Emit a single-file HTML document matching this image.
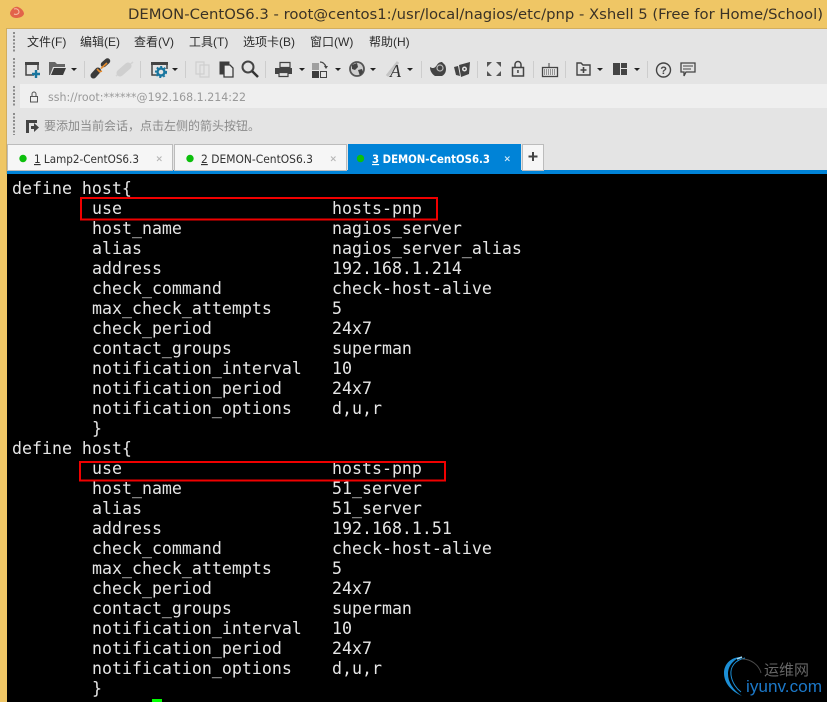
<!DOCTYPE html>
<html><head><meta charset="utf-8"><style>
html,body{margin:0;padding:0;background:#000}
body{width:827px;height:702px;overflow:hidden;position:relative}
svg{position:absolute;left:0;top:0;display:block}
.t{font-family:"DejaVu Sans Mono",monospace;font-size:16.6px;fill:#e6e6e6;white-space:pre}
.m{font-family:"Liberation Sans","Noto Sans CJK SC",sans-serif;font-size:12px;fill:#2b2b2b}
.tb{font-family:"DejaVu Sans","Noto Sans CJK SC",sans-serif;font-size:11.5px;fill:#333}
</style></head><body>
<svg width="827" height="702" viewBox="0 0 827 702" xmlns="http://www.w3.org/2000/svg">
<rect width="827" height="702" fill="#000"/>
<!-- frame -->
<rect width="827" height="28" fill="#efc665"/>
<rect width="7" height="702" fill="#efc665"/>
<rect x="6" y="28" width="821" height="142" fill="#e4e4e4"/>
<rect x="6" y="28" width="821" height="1" fill="#d2ae5e"/>
<rect x="6" y="28" width="1" height="146" fill="#d2ae5e"/>
<!-- app icon -->
<path d="M10 13c1-4 5-7 8-6 3 1 6 4 6 7-1 3-5 4-8 4-3 0-6-2-6-5z" fill="#e2634a"/>
<path d="M14 9c3-1 5 1 5 3s-3 3-5 2" fill="none" stroke="#f6c0a8" stroke-width="1"/>
<text x="128" y="19" font-family="'DejaVu Sans',sans-serif" font-size="14.6" fill="#3a3226" textLength="695" lengthAdjust="spacingAndGlyphs">DEMON-CentOS6.3 - root@centos1:/usr/local/nagios/etc/pnp - Xshell 5 (Free for Home/School)</text>
<!-- grips -->
<path d="M14 32v20M14 58v20M14 86v20M14 113v22" stroke="#8c8c8c" stroke-width="2" stroke-dasharray="2 1.500"/>
<!-- menu -->
<text class="m" x="27" y="46">文件(F)</text>
<text class="m" x="80" y="46">编辑(E)</text>
<text class="m" x="134" y="46">查看(V)</text>
<text class="m" x="189" y="46">工具(T)</text>
<text class="m" x="243" y="46">选项卡(B)</text>
<text class="m" x="310" y="46">窗口(W)</text>
<text class="m" x="369" y="46">帮助(H)</text>
<!-- toolbar separators -->
<g fill="#cdcdcd"><rect x="84" y="61" width="1" height="17"/><rect x="140" y="61" width="1" height="17"/><rect x="185" y="61" width="1" height="17"/><rect x="265" y="61" width="1" height="17"/><rect x="421" y="61" width="1" height="17"/><rect x="477" y="61" width="1" height="17"/><rect x="533" y="61" width="1" height="17"/><rect x="565" y="61" width="1" height="17"/><rect x="647" y="61" width="1" height="17"/></g>
<!-- new session -->
<path d="M26 63v12h8M38 65v5" fill="none" stroke="#444" stroke-width="1.500"/><path d="M25 62h14v3H25z" fill="#444"/>
<path d="M36 70v8M32 74h8" stroke="#19769f" stroke-width="2.400"/>
<!-- open -->
<path d="M49 75V62h6l2 2h8v3h-12l-3 8z" fill="#666"/><path d="M51 75l3-7h12l-3 7z" fill="#3c3c3c"/>
<path d="M71 68h6l-3 3z" fill="#222"/>
<!-- connect -->
<path d="M93.500 75.500l4.500-5" stroke="#3b3b3b" stroke-width="6" stroke-linecap="round"/>
<path d="M103.500 64.500l4-3.500" stroke="#3b3b3b" stroke-width="5.500" stroke-linecap="round"/>
<path d="M99 72l3-1M97 69l3 3" stroke="#e58c2e" stroke-width="1.600"/>
<path d="M101 68.500l6-5.500" stroke="#e58c2e" stroke-width="1.700"/>
<!-- disconnect -->
<path d="M116 76l17-14" stroke="#d4d4d4" stroke-width="1.500"/>
<path d="M120 73l8-7" stroke="#cfcfcf" stroke-width="7" stroke-linecap="round"/>
<!-- props -->
<path d="M152 63v12h6M167 65v4" fill="none" stroke="#444" stroke-width="1.500"/><path d="M151 62h17v3h-17z" fill="#444"/>
<circle cx="161" cy="72" r="3.500" fill="none" stroke="#19769f" stroke-width="2.400"/><circle cx="161" cy="72" r="5.300" fill="none" stroke="#19769f" stroke-width="1.500" stroke-dasharray="2 2"/>
<path d="M172 68h6l-3 3z" fill="#222"/>
<!-- copy -->
<path d="M196 62h8v12h-8zM200 65h9v12h-9z" fill="#e4e4e4" stroke="#cfcfcf" stroke-width="1.200"/>
<!-- paste -->
<path d="M226 74h-6V62h9v3" fill="#3c3c3c" stroke="#3c3c3c"/><path d="M224 65h6l3 3v9h-9z" fill="#e9e9e9" stroke="#3c3c3c" stroke-width="1.300"/>
<!-- find -->
<circle cx="248" cy="67" r="5.500" fill="none" stroke="#444" stroke-width="2"/><path d="M252 71l6 6" stroke="#333" stroke-width="2.500"/>
<!-- print -->
<path d="M280 62.500h10v5h-10z" fill="#e4e4e4" stroke="#444" stroke-width="1.200"/><path d="M275 68h17v6h-17z" fill="#444"/><path d="M279 72.500h9v4h-9z" fill="#e4e4e4" stroke="#444" stroke-width="1.200"/>
<path d="M299 68h6l-3 3z" fill="#222"/>
<!-- transfer -->
<rect x="312" y="63" width="7" height="7" fill="#a0a0a0"/><rect x="312" y="71" width="7" height="7" fill="#3c3c3c"/><rect x="320.500" y="71.500" width="6" height="6" fill="none" stroke="#444"/>
<path d="M320 62c3 0 5 2 6 5" fill="none" stroke="#444" stroke-width="1.300"/><path d="M324 66h4l-2 3z" fill="#444"/>
<path d="M335 68h6l-3 3z" fill="#222"/>
<!-- globe -->
<circle cx="357" cy="69" r="7" fill="#cfcfcf" stroke="#555" stroke-width="1.800"/><path d="M352 65l5-2 1 4-3 3-3-1zM358 70l4-1 1 3-3 4z" fill="#444"/>
<path d="M370 68h6l-3 3z" fill="#222"/>
<!-- font -->
<path d="M387 76l11-14" stroke="#c4c4c4" stroke-width="3"/>
<text x="390" y="77" font-family="'Liberation Serif',serif" font-style="italic" font-size="18" fill="#333">A</text>
<path d="M407 68h6l-3 3z" fill="#222"/>
<!-- swirl -->
<path d="M430 67c3 2 5 1 7-2 1-2 3-3 5-3l3 3c2 4 1 9-3 11h-7c-3-2-5-5-5-9z" fill="#444"/><circle cx="440" cy="68" r="3" fill="none" stroke="#bbb" stroke-width="1.200"/>
<!-- xftp -->
<path d="M454 67l4-1 2 10-4-1zM459 65l11-3-1 12-8 3z" fill="#444"/><circle cx="464.500" cy="69" r="2.500" fill="#e4e4e4"/><circle cx="464.500" cy="69" r="1" fill="#444"/>
<!-- fullscreen -->
<path d="M487 62h5l-5 5zM501 62h-5l5 5zM487 76h5l-5-5zM501 76h-5l5-5z" fill="#555"/>
<!-- lock -->
<rect x="512.500" y="67.500" width="11" height="8.500" fill="none" stroke="#444" stroke-width="1.500"/><path d="M515 67v-2.500a3 3 0 0 1 6 0V67" fill="none" stroke="#444" stroke-width="1.500"/><rect x="517.200" y="70" width="1.500" height="3" fill="#444"/>
<!-- keyboard -->
<rect x="542.500" y="67.500" width="15" height="9" fill="none" stroke="#444" stroke-width="1.300"/><path d="M544 70h12M544 72h12M544 74h12" stroke="#444" stroke-width="1" stroke-dasharray="1 1"/><path d="M549 67v-4" stroke="#444"/>
<!-- add folder -->
<path d="M577 63h4l2 2h7v10h-13z" fill="none" stroke="#444" stroke-width="1.400"/><path d="M583.500 67v6M580.500 70h6" stroke="#444" stroke-width="1.600"/>
<path d="M597 68h6l-3 3z" fill="#222"/>
<!-- layout -->
<rect x="613" y="63" width="7" height="12" fill="#444"/><rect x="621" y="63" width="6" height="5" fill="#444"/><rect x="621" y="69" width="6" height="6" fill="#444"/>
<path d="M634 68h6l-3 3z" fill="#222"/>
<!-- help -->
<circle cx="663.500" cy="70" r="7" fill="none" stroke="#444" stroke-width="1.400"/>
<text x="660.300" y="74" font-family="'Liberation Sans',sans-serif" font-size="11" font-weight="bold" fill="#444">?</text>
<!-- chat -->
<path d="M681 63h14v9h-9l-2 4v-4h-3z" fill="none" stroke="#444" stroke-width="1.300"/><path d="M683 66h10M683 69h8" stroke="#444"/>
<!-- address bar -->
<rect x="20" y="84" width="807" height="24" fill="#efefef"/>
<rect x="30.500" y="96.500" width="7" height="5.500" fill="none" stroke="#555"/><path d="M32 96v-2a2 2 0 0 1 4 0v2" fill="none" stroke="#555"/>
<text x="48" y="101" font-family="'DejaVu Sans',sans-serif" font-size="11.500" fill="#999" textLength="198" lengthAdjust="spacingAndGlyphs">ssh://root:******@192.168.1.214:22</text>
<!-- hint -->
<path d="M26 120h11v3h-8v10h-3z" fill="#444"/><path d="M31 126h3v-3l5 4.500-5 4.500v-3h-3z" fill="#444"/>
<text x="44" y="130" font-family="'Noto Sans CJK SC',sans-serif" font-size="12" fill="#8a8a8a">要添加当前会话，点击左侧的箭头按钮。</text>
<!-- tabs -->
<rect x="7" y="170" width="820" height="4" fill="#0083d7"/>
<rect x="7.500" y="144.500" width="165" height="26" fill="#f6f6f6" stroke="#bcbcbc"/>
<rect x="174.500" y="144.500" width="172" height="26" fill="#f6f6f6" stroke="#bcbcbc"/>
<rect x="348" y="144" width="173" height="27" fill="#0083d7"/>
<rect x="522.500" y="144.500" width="21" height="26" fill="#f6f6f6" stroke="#bcbcbc"/>
<path d="M533 152v9M528.500 156.500h9" stroke="#444" stroke-width="2"/>
<circle cx="23" cy="158.500" r="3.700" fill="#0cbf0c"/>
<circle cx="190" cy="158.500" r="3.700" fill="#0cbf0c"/>
<circle cx="360.500" cy="158.500" r="3.700" fill="#0cbf0c"/>
<text class="tb" x="34" y="163" textLength="105" lengthAdjust="spacingAndGlyphs"><tspan text-decoration="underline">1</tspan> Lamp2-CentOS6.3</text>
<text class="tb" x="201" y="163" textLength="112" lengthAdjust="spacingAndGlyphs"><tspan text-decoration="underline">2</tspan> DEMON-CentOS6.3</text>
<text class="tb" x="372" y="163" textLength="118" lengthAdjust="spacingAndGlyphs" style="fill:#fff;font-weight:bold"><tspan text-decoration="underline">3</tspan> DEMON-CentOS6.3</text>
<path d="M157 156.500l4.500 4.500M161.500 156.500l-4.500 4.500M331 156.500l4.500 4.500M335.500 156.500l-4.500 4.500" stroke="#b5b5b5"/>
<path d="M505 156.500l4.500 4.500M509.500 156.500l-4.500 4.500" stroke="#d5ecfa"/>
<!-- terminal -->
<g>
<text class="t" x="12" y="194">define host{</text>
<text class="t" x="92" y="214">use</text><text class="t" x="332" y="214">hosts-pnp</text>
<text class="t" x="92" y="234">host_name</text><text class="t" x="332" y="234">nagios_server</text>
<text class="t" x="92" y="254">alias</text><text class="t" x="332" y="254">nagios_server_alias</text>
<text class="t" x="92" y="274">address</text><text class="t" x="332" y="274">192.168.1.214</text>
<text class="t" x="92" y="294">check_command</text><text class="t" x="332" y="294">check-host-alive</text>
<text class="t" x="92" y="314">max_check_attempts</text><text class="t" x="332" y="314">5</text>
<text class="t" x="92" y="334">check_period</text><text class="t" x="332" y="334">24x7</text>
<text class="t" x="92" y="354">contact_groups</text><text class="t" x="332" y="354">superman</text>
<text class="t" x="92" y="374">notification_interval</text><text class="t" x="332" y="374">10</text>
<text class="t" x="92" y="394">notification_period</text><text class="t" x="332" y="394">24x7</text>
<text class="t" x="92" y="414">notification_options</text><text class="t" x="332" y="414">d,u,r</text>
<text class="t" x="92" y="434">}</text>
<text class="t" x="12" y="454">define host{</text>
<text class="t" x="92" y="474">use</text><text class="t" x="332" y="474">hosts-pnp</text>
<text class="t" x="92" y="494">host_name</text><text class="t" x="332" y="494">51_server</text>
<text class="t" x="92" y="514">alias</text><text class="t" x="332" y="514">51_server</text>
<text class="t" x="92" y="534">address</text><text class="t" x="332" y="534">192.168.1.51</text>
<text class="t" x="92" y="554">check_command</text><text class="t" x="332" y="554">check-host-alive</text>
<text class="t" x="92" y="574">max_check_attempts</text><text class="t" x="332" y="574">5</text>
<text class="t" x="92" y="594">check_period</text><text class="t" x="332" y="594">24x7</text>
<text class="t" x="92" y="614">contact_groups</text><text class="t" x="332" y="614">superman</text>
<text class="t" x="92" y="634">notification_interval</text><text class="t" x="332" y="634">10</text>
<text class="t" x="92" y="654">notification_period</text><text class="t" x="332" y="654">24x7</text>
<text class="t" x="92" y="674">notification_options</text><text class="t" x="332" y="674">d,u,r</text>
<text class="t" x="92" y="694">}</text>
</g>
<rect x="152" y="699" width="10" height="3" fill="#00ff00"/>
<!-- red boxes -->
<rect x="81" y="198" width="356" height="21.500" fill="none" stroke="#f00000" stroke-width="2"/>
<rect x="80" y="462" width="365" height="18.500" fill="none" stroke="#f00000" stroke-width="2"/>
<!-- watermark -->
<path d="M741 657C731 657 724 664 724 673C724 683 731 691 742 696C733 690 728 682 728 674C728 666 733 660 741 657z" fill="#1c8fd6"/>
<path d="M745 658C735 660 730 667 731 675C732 683 737 689 741 692" fill="none" stroke="#1c8fd6" stroke-width="1"/>
<path d="M742 659C751 659 759 665 761 673" fill="none" stroke="#4a4a4a" stroke-width="1"/>
<path d="M737 659l5-2" stroke="#9fd8f5" stroke-width="1.500"/>
<text x="764" y="675" font-family="'Noto Sans CJK SC',sans-serif" font-size="15" fill="#666">运维网</text>
<text x="746" y="692" font-family="'Liberation Sans',sans-serif" font-size="17" fill="#1c78c8" textLength="76" lengthAdjust="spacingAndGlyphs">iyunv.com</text>
</svg>
</body></html>
